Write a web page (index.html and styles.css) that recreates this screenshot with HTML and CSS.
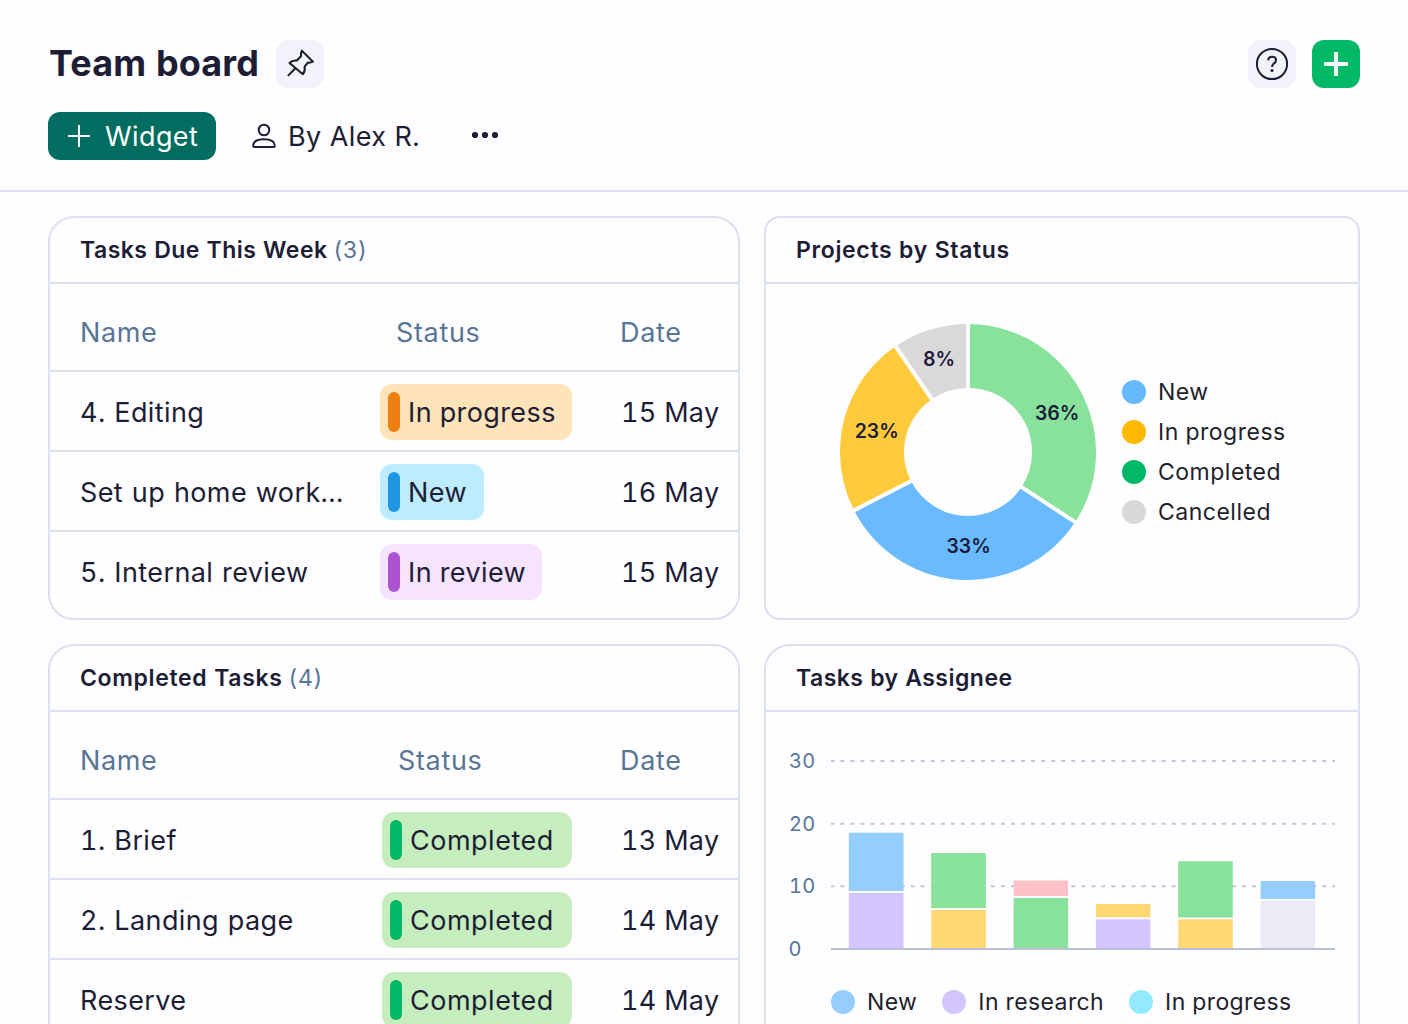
FILE: index.html
```html
<!DOCTYPE html>
<html lang="en">
<head>
  <meta charset="UTF-8" />
  <meta name="viewport" content="width=device-width, initial-scale=1.0">
  <title>Team board</title>
  <link rel="stylesheet" href="styles.css">
</head>
<body>

  <header class="header">
    <div class="title-row">
      <h1>Team board</h1>
      <button class="icon-btn" aria-label="Pin">
        <svg width="48" height="48" viewBox="0 0 48 48" fill="none" stroke="#191a2b" stroke-width="2" stroke-linejoin="round" stroke-linecap="round">
          <path d="M25.8 10.6 L37 21.7 C35 22.6 33.6 22.8 31.9 22.6 L28.6 26.6 C29.2 29.6 28.6 32 26.9 34.2 L13.5 23 C15.5 20.8 18 20.2 20.8 20.5 L25 16.2 C24.6 14.2 24.9 12.4 25.8 10.6 Z M19.4 28.2 L12.4 35.4"/>
        </svg>
      </button>
      <button class="icon-btn help-btn" aria-label="Help">
        <svg width="48" height="48" viewBox="0 0 48 48" fill="none">
          <circle cx="24" cy="24" r="15.1" stroke="#1d1d35" stroke-width="2"/>
          <path d="M20.2 20.4 C20.3 18 21.9 16.8 24.1 16.8 C26.4 16.8 28 18.2 28 20.2 C28 21.9 27 22.8 25.8 23.6 C24.5 24.5 24.1 25.1 24.1 27" stroke="#1d1d35" stroke-width="2.1"/>
          <circle cx="24" cy="30.5" r="1.6" fill="#1d1d35"/>
        </svg>
      </button>
      <button class="icon-btn add-btn" aria-label="Add">
        <svg width="48" height="48" viewBox="0 0 48 48" stroke="#fff" stroke-width="4">
          <path d="M12 24 H36 M24 12 V36"/>
        </svg>
      </button>
    </div>

    <div class="toolbar">
      <button class="widget-btn">
        <svg width="22" height="22" viewBox="0 0 22 22" stroke="#fff" stroke-width="2">
          <path d="M0 11 H22 M11 0 V22"/>
        </svg>
        <span>Widget</span>
      </button>
      <div class="author">
        <svg width="24" height="26" viewBox="0 0 24 26" fill="none" stroke="#1d1d35" stroke-width="2">
          <circle cx="12" cy="7" r="5.3"/>
          <path d="M1.2 22.8 C1.2 18.6 5.6 16.3 12 16.3 C18.4 16.3 22.8 18.6 22.8 22.8 C22.8 23.6 22.5 24 21.7 24 H2.3 C1.5 24 1.2 23.6 1.2 22.8 Z"/>
        </svg>
        <span>By Alex R.</span>
      </div>
      <svg class="more" width="28" height="8" viewBox="0 0 28 8" fill="#1d1d35">
        <circle cx="4" cy="4" r="3.1"/>
        <circle cx="14" cy="4" r="3.1"/>
        <circle cx="24" cy="4" r="3.1"/>
      </svg>
    </div>
  </header>

  <main class="board">
    <section class="card">
      <h2 class="tight">Tasks Due This Week <span>(3)</span></h2>
      <div class="row row-head">
        <div class="name">Name</div>
        <div class="status">Status</div>
        <div class="date">Date</div>
      </div>
      <div class="row">
        <div class="name">4. Editing</div>
        <div><span class="pill progress">In progress</span></div>
        <div class="date">15 May</div>
      </div>
      <div class="row">
        <div class="name">Set up home work...</div>
        <div><span class="pill new">New</span></div>
        <div class="date">16 May</div>
      </div>
      <div class="row">
        <div class="name">5. Internal review</div>
        <div><span class="pill review">In review</span></div>
        <div class="date">15 May</div>
      </div>
    </section>

    <section class="card card-status">
      <h2>Projects by Status</h2>
      <div class="donut-wrap">
        <svg class="donut" width="256" height="256" viewBox="-128 -128 256 256">
          <g fill="none" stroke-width="64" transform="rotate(-90)">
            <circle r="96" pathLength="360" stroke="#88e29b" stroke-dasharray="123.2 360"/>
            <circle r="96" pathLength="360" stroke="#6abaff" stroke-dasharray="119.7 360" stroke-dashoffset="-123.2"/>
            <circle r="96" pathLength="360" stroke="#ffcb3c" stroke-dasharray="82.7 360" stroke-dashoffset="-242.9"/>
            <circle r="96" pathLength="360" stroke="#dbd8da" stroke-dasharray="34.4 360" stroke-dashoffset="-325.6"/>
          </g>
          <path class="donut-gap" d="M0 -60 V-130 M50.2 32.9 L108.8 71.2 M-53.4 27.3 L-115.7 59.2 M-33.9 -49.5 L-73.5 -107.3"/>
          <g class="donut-text">
            <text x="89" y="-32">36%</text>
            <text x="0.5" y="101">33%</text>
            <text x="-91.5" y="-14.5">23%</text>
            <text x="-29" y="-86.5">8%</text>
          </g>
        </svg>
        <ul class="legend">
          <li><i class="dot blue"></i>New</li>
          <li><i class="dot amber"></i>In progress</li>
          <li><i class="dot green"></i>Completed</li>
          <li><i class="dot gray"></i>Cancelled</li>
        </ul>
      </div>
    </section>

    <section class="card card-done">
      <h2>Completed Tasks <span>(4)</span></h2>
      <div class="row row-head">
        <div class="name">Name</div>
        <div class="status">Status</div>
        <div class="date">Date</div>
      </div>
      <div class="row">
        <div class="name">1. Brief</div>
        <div><span class="pill completed">Completed</span></div>
        <div class="date">13 May</div>
      </div>
      <div class="row">
        <div class="name">2. Landing page</div>
        <div><span class="pill completed">Completed</span></div>
        <div class="date">14 May</div>
      </div>
      <div class="row">
        <div class="name">Reserve</div>
        <div><span class="pill completed">Completed</span></div>
        <div class="date">14 May</div>
      </div>
    </section>

    <section class="card">
      <h2 class="tight">Tasks by Assignee</h2>
      <svg class="bars" width="592" height="250" viewBox="766 712 592 250">
        <g class="axis">
          <text x="789" y="768">30</text>
          <text x="789" y="830.5">20</text>
          <text x="789" y="893">10</text>
          <text x="788.5" y="956">0</text>
        </g>
        <path class="grid" d="M831 761 H1335 M831 823.7 H1335 M831 886.3 H1335"/>

        <path fill="#96cdff" d="M848.8 891 V833.8 q0 -1 1 -1 h52.7 q1 0 1 1 V891 Z"/>
        <rect x="848.8" y="893" width="54.7" height="56" fill="#d3c5ff"/>
        <path fill="#88e29b" d="M931.2 908 V854 q0 -1 1 -1 h52.7 q1 0 1 1 V908 Z"/>
        <rect x="931.2" y="910" width="54.7" height="39" fill="#ffd874"/>
        <path fill="#ffc1c8" d="M1013.6 896 V881.6 q0 -1 1 -1 h52.5 q1 0 1 1 V896 Z"/>
        <rect x="1013.6" y="898" width="54.5" height="51" fill="#88e29b"/>
        <path fill="#ffd874" d="M1095.9 917.3 V905 q0 -1 1 -1 h52.5 q1 0 1 1 V917.3 Z"/>
        <rect x="1095.9" y="919.3" width="54.5" height="30" fill="#d3c5ff"/>
        <path fill="#88e29b" d="M1178.2 917.4 V862.3 q0 -1 1 -1 h52.6 q1 0 1 1 V917.4 Z"/>
        <rect x="1178.2" y="919.3" width="54.6" height="30" fill="#ffd874"/>
        <path fill="#96cdff" d="M1260.6 899 V882 q0 -1 1 -1 h52.5 q1 0 1 1 V899 Z"/>
        <rect x="1260.6" y="901" width="54.5" height="48" fill="#eaebf7"/>
        <path d="M831 949 H1335" stroke="#bac3d6" stroke-width="2"/>
      </svg>
      <ul class="legend legend-row">
        <li><i class="dot sky"></i>New</li>
        <li><i class="dot violet"></i>In research</li>
        <li><i class="dot cyan"></i>In progress</li>
      </ul>
    </section>
  </main>

</body>
</html>
```

FILE: styles.css
```css
* {
  box-sizing: border-box;
}

body {
  margin: 0;
  height: 1024px;
  overflow: hidden;
  font-family: Inter, sans-serif;
  font-size: 27px;
  font-variant-numeric: tabular-nums;
  letter-spacing: 0.4px;
  color: #1d1d35;
  background-color: #fefdff;
}

button {
  border: none;
  padding: 0;
  font: inherit;
  letter-spacing: inherit;
  cursor: pointer;
}

svg {
  display: block;
}

.header {
  height: 192px;
  padding: 40px 48px 0;
  border-bottom: 2px solid #dae0f0;
}

.title-row {
  display: flex;
  align-items: center;
  gap: 16px;
}

h1 {
  margin: 0;
  width: 212px;
  padding: 0 0 2px 1px;
  font-size: 36px;
  line-height: 46px;
  font-weight: 700;
  letter-spacing: 0.1px;
  white-space: nowrap;
}

.icon-btn {
  width: 48px;
  height: 48px;
  border-radius: 12px;
  background-color: #f3f4fb;
}

.help-btn {
  margin-left: auto;
}

.add-btn {
  background-color: #00b865;
}

.toolbar {
  display: flex;
  align-items: center;
  margin-top: 24px;
}

.widget-btn {
  display: flex;
  align-items: center;
  gap: 15px;
  width: 168px;
  height: 48px;
  padding-left: 20px;
  border-radius: 12px;
  background-color: #006d60;
  color: #fff;
}

.author {
  display: flex;
  align-items: center;
  gap: 12px;
  width: 219px;
  margin-left: 36px;
  word-spacing: 0.5px;
}

.more {
  margin-top: -2px;
}

.board {
  display: grid;
  grid-template-columns: 692px 596px;
  grid-template-rows: 404px 460px;
  gap: 24px;
  height: 832px;
  padding: 24px 48px 0;
  overflow: hidden;
}

.card {
  border: 2px solid #dae0f0;
  border-radius: 26px;
  overflow: hidden;
}

.card-status {
  border-radius: 16px;
}

h2 {
  margin: 0;
  height: 66px;
  padding-left: 30px;
  border-bottom: 2px solid #dae0f0;
  font-size: 23px;
  font-weight: 600;
  line-height: 64px;
  letter-spacing: 0.65px;
}

h2.tight {
  letter-spacing: 0.48px;
}

h2 span {
  margin-left: -1px;
  font-weight: 400;
  color: #587596;
}

.row {
  display: grid;
  grid-template-columns: 330px 242px 116px;
  height: 80px;
  padding-top: 12px;
  line-height: 57px;
  border-bottom: 2px solid #dae0f0;
  white-space: nowrap;
}

.card-done .row {
  grid-template-columns: 332px 240px 116px;
}

.row:last-child {
  border-bottom: none;
}

.row-head {
  height: 88px;
  padding-top: 20px;
  letter-spacing: 0.65px;
  color: #587596;
}

.name {
  padding-left: 30px;
  word-spacing: 1.1px;
}

.status {
  padding-left: 16px;
}

.date {
  margin-left: -1px;
  letter-spacing: 0.3px;
}

.row-head .date {
  margin-left: -2px;
  letter-spacing: 0.65px;
}

.pill {
  display: inline-flex;
  align-items: center;
  gap: 8px;
  height: 56px;
  padding: 0 16px 0 8px;
  border-radius: 12px;
  vertical-align: top;
}

.pill::before {
  content: "";
  width: 12px;
  height: 40px;
  border-radius: 6px;
}

.progress {
  background-color: #ffe3b9;
}

.progress::before {
  background-color: #f07f13;
}

.new {
  padding-right: 17px;
  background-color: #bdebff;
}

.new::before {
  background-color: #2196e3;
}

.review {
  background-color: #f6e4ff;
}

.review::before {
  background-color: #ae53cf;
}

.completed {
  width: 190px;
  letter-spacing: 0.5px;
  background-color: #c5edbd;
}

.completed::before {
  background-color: #00b865;
}

.donut-wrap {
  display: flex;
  padding: 40px 0 0 74px;
}

.donut-gap {
  fill: none;
  stroke: #fefdff;
  stroke-width: 4;
}

.donut-text {
  font-size: 19.5px;
  font-weight: 600;
  letter-spacing: -0.2px;
  fill: #1b1b3a;
  text-anchor: middle;
}

.legend {
  margin: 48px 0 0 26px;
  padding: 0;
  list-style: none;
  font-size: 23px;
  line-height: 40px;
  letter-spacing: 0.5px;
  color: #1f1f2b;
}

.legend li {
  display: flex;
  align-items: center;
  gap: 12px;
}

.dot {
  width: 24px;
  height: 24px;
  border-radius: 50%;
}

.blue {
  background-color: #66b8ff;
}

.amber {
  background-color: #ffb900;
}

.green {
  background-color: #00b865;
}

.gray {
  background-color: #d9d7da;
}

.sky {
  background-color: #96cdff;
}

.violet {
  background-color: #d3c5ff;
}

.cyan {
  background-color: #93e9ff;
}

.axis {
  font-size: 20px;
  fill: #587596;
}

.grid {
  fill: none;
  stroke: #bfc8d9;
  stroke-width: 2;
  stroke-dasharray: 4 6.04;
  stroke-dashoffset: 0.7;
}

.legend-row {
  display: flex;
  gap: 25px;
  margin: 20px 0 0 65px;
  letter-spacing: 0.4px;
}
```
